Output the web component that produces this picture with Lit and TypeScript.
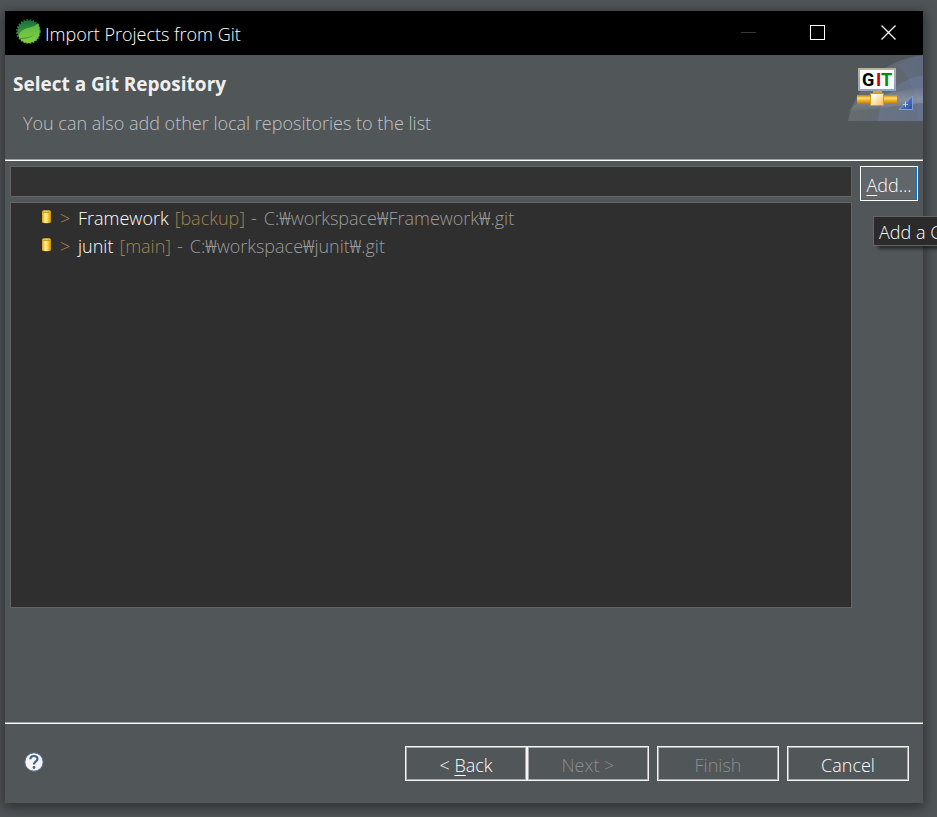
import { LitElement, html, css } from "lit";
import { customElement, state } from "lit/decorators.js";

interface Repository {
  name: string;
  branch: string;
  path: string;
}

@customElement("app-root")
export class AppRoot extends LitElement {
  @state() private repositories: Repository[] = [
    { name: "Framework", branch: "[backup]", path: "C:₩workspace₩Framework₩.git" },
    { name: "junit", branch: "[main]", path: "C:₩workspace₩junit₩.git" },
  ];

  static styles = css`
    :host {
      display: flex;
      box-sizing: border-box;
      min-height: 100vh;
      padding: 11px 14px 14px 5px;
      overflow: hidden;
      background: #505557;
      color: #fff;
      font: 300 18px/28px "Open Sans", "Noto Sans", "Noto Sans CJK KR", sans-serif;
    }
    * {
      box-sizing: border-box;
    }
    svg {
      display: block;
    }
    button,
    input {
      font: inherit;
      color: inherit;
      margin: 0;
      border-radius: 0;
    }
    .dialog {
      flex: 1;
      min-width: 0;
      display: flex;
      flex-direction: column;
      background: #515658;
      box-shadow: 0 3px 12px 2px rgba(0, 0, 0, 0.42);
    }
    .titlebar {
      display: flex;
      align-items: center;
      height: 44px;
      padding-left: 11px;
      background: #000;
    }
    .titlebar .label {
      flex: 1;
      margin: 2px 0 0 4px;
    }
    .window-button {
      display: grid;
      place-items: center;
      width: 70px;
      height: 44px;
      padding: 0;
      border: 0;
      background: none;
    }
    .banner {
      display: flex;
      justify-content: space-between;
      height: 104px;
    }
    .heading {
      padding: 15px 8px;
    }
    .heading h1 {
      margin: 0;
      color: #f0f0f0;
      font-size: 19px;
      line-height: 28px;
      font-weight: 700;
    }
    .heading p {
      margin: 11px 0 0 10px;
      color: #c0c3c4;
    }
    .rule {
      height: 2px;
      border: 0;
      margin: 0;
      border-top: 1px solid #a0a0a0;
      border-bottom: 1px solid #fff;
    }
    .content {
      flex: 1;
      display: flex;
      gap: 8px;
      padding: 5px 5px 114px;
      min-height: 360px;
    }
    .main {
      flex: 1;
      min-width: 0;
      display: flex;
      flex-direction: column;
      gap: 5px;
    }
    .filter {
      width: 100%;
      height: 31px;
      padding: 0 8px;
      border: 1px solid #646464;
      background: #323232;
      outline: none;
    }
    .list {
      flex: 1;
      margin: 0;
      padding: 1px 0 0 30px;
      list-style: none;
      border: 1px solid #646464;
      background: #2f2f2f;
    }
    .row {
      display: flex;
      align-items: center;
      height: 28px;
      white-space: nowrap;
    }
    .row svg {
      margin: 0 8px 4px 0;
    }
    .marker {
      width: 18px;
      color: #b08e56;
    }
    .name {
      margin-right: 6px;
    }
    .branch {
      margin-right: 6px;
      color: #a4844f;
    }
    .path {
      display: flex;
      gap: 7px;
      color: #9c9c9c;
    }
    .side {
      position: relative;
    }
    .add {
      width: 58px;
      height: 35px;
      padding: 3px 0 0;
      line-height: 20px;
      border: 1px solid #fff;
      outline: 1px solid #0078d7;
      outline-offset: -2px;
      background: #606669;
    }
    .tooltip {
      position: absolute;
      left: 13px;
      top: 50px;
      height: 30px;
      padding: 1px 5px 0;
      border: 1px solid #646464;
      background: #2b2b2b;
      white-space: nowrap;
      box-shadow: 4px 4px 3px -1px rgba(0, 0, 0, 0.5);
    }
    .mnemonic {
      text-decoration: underline;
      text-underline-offset: 3px;
      text-decoration-thickness: 1px;
    }
    .footer {
      display: flex;
      align-items: center;
      height: 79px;
      padding: 0 14px 0 19px;
    }
    .help {
      padding: 0 0 4px;
      border: 0;
      background: none;
    }
    .actions {
      display: flex;
      gap: 8px;
      margin-left: auto;
    }
    .pair {
      display: flex;
    }
    .action {
      width: 122px;
      height: 35px;
      padding: 3px 0 0;
      line-height: 20px;
      border: 1px solid #f4f4f4;
      background: none;
      box-shadow: inset 0 0 0 1px #a6a8a9;
    }
    .action:disabled {
      color: #8c8e8f;
    }
  `;

  private springIcon() {
    return html`<svg width="25" height="28" viewBox="0 0 25 28" aria-hidden="true">
      <defs>
        <linearGradient id="burr" x1="0" y1="0" x2="0" y2="1">
          <stop offset="0" stop-color="#16743c" />
          <stop offset="1" stop-color="#55a83a" />
        </linearGradient>
        <linearGradient id="leaf" x1="0" y1="0" x2="0" y2="1">
          <stop offset="0" stop-color="#5cb544" />
          <stop offset="1" stop-color="#83cf42" />
        </linearGradient>
      </defs>
      <circle cx="12.5" cy="12.5" r="11" fill="url(#burr)" />
      <circle cx="12.5" cy="12.5" r="11.3" fill="none" stroke="url(#burr)" stroke-width="2" stroke-dasharray="1.6 1.4" />
      <path d="M22 4C18 9 12 8 7 11C3 13 2 17 4 20C9 26 19 25 22.500 18C24.500 13 24 8 22 4Z" fill="url(#leaf)" />
      <path d="M3 19C11 19 17 18 21 12C17 18 12 20 4 20Z" fill="#3b9838" />
    </svg>`;
  }

  private gitBanner() {
    return html`<svg width="75" height="66" viewBox="0 0 75 66" role="img" aria-label="Git">
      <defs>
        <linearGradient id="sweep" x1="0" y1="0" x2="1" y2="0">
          <stop offset="0" stop-color="#8a8e94" />
          <stop offset="1" stop-color="#6c7b9a" />
        </linearGradient>
        <linearGradient id="band" x1="0" y1="0" x2="0" y2="1">
          <stop offset="0" stop-color="#fff" stop-opacity="0" />
          <stop offset="0.5" stop-color="#fff" stop-opacity="0.2" />
          <stop offset="1" stop-color="#fff" stop-opacity="0" />
        </linearGradient>
        <linearGradient id="pipe" x1="0" y1="0" x2="0" y2="1">
          <stop offset="0" stop-color="#c98000" />
          <stop offset="0.35" stop-color="#ffdf70" />
          <stop offset="0.6" stop-color="#eeb02c" />
          <stop offset="1" stop-color="#bd7800" />
        </linearGradient>
        <linearGradient id="node" x1="0" y1="0" x2="1" y2="1">
          <stop offset="0.2" stop-color="#fffdf4" />
          <stop offset="1" stop-color="#f2bd4d" />
        </linearGradient>
        <linearGradient id="frame" x1="0" y1="0" x2="0" y2="1">
          <stop offset="0" stop-color="#b9b29b" />
          <stop offset="1" stop-color="#91a4c4" />
        </linearGradient>
        <linearGradient id="corner" x1="0" y1="0" x2="1" y2="1">
          <stop offset="0" stop-color="#6f94d2" />
          <stop offset="1" stop-color="#2b4f9c" />
        </linearGradient>
      </defs>
      <path d="M0 66C5 38 31 5 75 0V66Z" fill="url(#sweep)" opacity="0.4" />
      <path d="M49 10Q61 3 75 0V66H70C70 40 63 22 49 10Z" fill="#6a7ca4" opacity="0.25" />
      <path d="M30 66C30 43 50 23 75 21V66Z" fill="#7888ab" opacity="0.35" />
      <path d="M0 55L20 42L75 32V48L0 57Z" fill="url(#band)" />
      <rect x="11" y="14" width="36" height="21" fill="#f7fcff" stroke="url(#frame)" stroke-width="2" />
      <text y="31" font-family="Roboto" font-size="18" font-weight="700">
        <tspan x="14" fill="#000">G</tspan><tspan x="28" fill="#d00000">I</tspan><tspan x="33" fill="#078a0b">T</tspan>
      </text>
      <rect x="25" y="36" width="9" height="3" fill="#e2a11c" />
      <rect x="9" y="40" width="40" height="9" fill="url(#pipe)" />
      <rect x="22.5" y="38.5" width="13" height="12" fill="url(#node)" stroke="#d69517" />
      <path d="M64.500 41V54.500H51Z" fill="url(#corner)" stroke="#829fd0" />
      <path d="M57.500 46.500V52M55 49.500H60" stroke="#b4caf0" />
    </svg>`;
  }

  private repositoryIcon() {
    return html`<svg width="11" height="15" viewBox="0 0 11 15" aria-hidden="true">
      <defs>
        <linearGradient id="drum" x1="0" y1="0" x2="1" y2="0">
          <stop offset="0" stop-color="#d79a08" />
          <stop offset="0.35" stop-color="#fff29a" />
          <stop offset="0.6" stop-color="#fbdc51" />
          <stop offset="1" stop-color="#d08d00" />
        </linearGradient>
      </defs>
      <path d="M1 2Q5.500 0 10 2V13.500Q5.500 15 1 13.500Z" fill="url(#drum)" />
      <ellipse cx="5.500" cy="2.500" rx="4" ry="1" fill="#f7d75a" stroke="#c58f14" />
    </svg>`;
  }

  render() {
    return html`
      <main class="dialog">
        <header class="titlebar">
          ${this.springIcon()}
          <span class="label">Import Projects from Git</span>
          <button class="window-button" aria-label="Minimize" disabled>
            <svg width="16" height="16"><path d="M1 7.500H16" stroke="#363636" /></svg>
          </button>
          <button class="window-button" aria-label="Maximize">
            <svg width="16" height="16"><rect x="0.500" y="0.500" width="14" height="14" fill="none" stroke="#fff" /></svg>
          </button>
          <button class="window-button" aria-label="Close">
            <svg width="16" height="16"><path d="M1.500 0.500L15.500 14.500M15.500 0.500L1.500 14.500" stroke="#fff" stroke-width="1.200" /></svg>
          </button>
        </header>
        <section class="banner">
          <div class="heading">
            <h1>Select a Git Repository</h1>
            <p>You can also add other local repositories to the list</p>
          </div>
          ${this.gitBanner()}
        </section>
        <hr class="rule" />
        <section class="content">
          <div class="main">
            <input class="filter" type="text" aria-label="Filter repositories" />
            <ul class="list">
              ${this.repositories.map(
                (repo) => html`<li class="row">
                  ${this.repositoryIcon()}
                  <span class="marker">&gt;</span>
                  <span class="name">${repo.name}</span>
                  <span class="branch">${repo.branch}</span>
                  <span class="path"><span>-</span><span>${repo.path}</span></span>
                </li>`
              )}
            </ul>
          </div>
          <div class="side">
            <button class="add"><span class="mnemonic">A</span>dd...</button>
            <div class="tooltip" role="tooltip">Add a Git repository</div>
          </div>
        </section>
        <hr class="rule" />
        <footer class="footer">
          <button class="help" aria-label="Help">
            <svg width="20" height="20" viewBox="0 0 20 20">
              <circle cx="10" cy="10" r="9.200" fill="#f4f4f4" stroke="#4f6590" />
              <path d="M6.300 7.300C6.500 2.900 13.500 3 13.500 7C13.500 9.500 10 9.500 10 12.500" fill="none" stroke="#4b6087" stroke-width="2.200" />
              <circle cx="10" cy="15.500" r="1.400" fill="#4b6087" />
            </svg>
          </button>
          <div class="actions">
            <div class="pair">
              <button class="action">&lt; <span class="mnemonic">B</span>ack</button>
              <button class="action" disabled>Next &gt;</button>
            </div>
            <button class="action" disabled>Finish</button>
            <button class="action">Cancel</button>
          </div>
        </footer>
      </main>
    `;
  }
}
